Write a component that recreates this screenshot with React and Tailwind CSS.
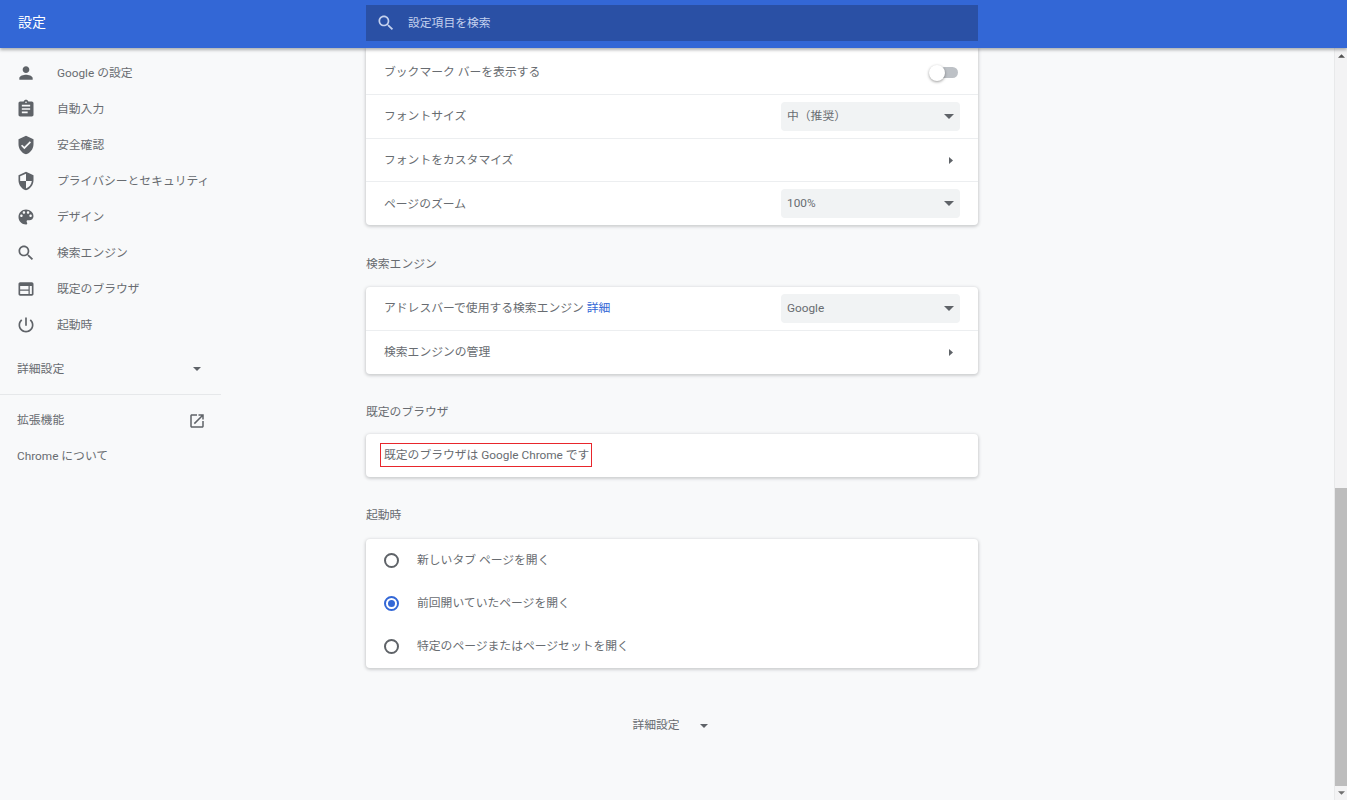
const P = {
  person: "M12 12c2.21 0 4-1.79 4-4s-1.79-4-4-4-4 1.79-4 4 1.79 4 4 4zm0 2c-2.67 0-8 1.34-8 4v2h16v-2c0-2.66-5.33-4-8-4z",
  assignment: "M19 3h-4.18C14.4 1.84 13.3 1 12 1c-1.3 0-2.4.84-2.82 2H5c-1.1 0-2 .9-2 2v14c0 1.1.9 2 2 2h14c1.1 0 2-.9 2-2V5c0-1.1-.9-2-2-2zm-7 0c.55 0 1 .45 1 1s-.45 1-1 1-1-.45-1-1 .45-1 1-1zm2 14H7v-2h7v2zm3-4H7v-2h10v2zm0-4H7V7h10v2z",
  verified: "M12 1L3 5v6c0 5.55 3.84 10.74 9 12 5.16-1.26 9-6.45 9-12V5l-9-4zm-2 16l-4-4 1.41-1.41L10 14.17l6.59-6.59L18 9l-8 8z",
  security: "M12 1L3 5v6c0 5.55 3.84 10.74 9 12 5.16-1.26 9-6.45 9-12V5l-9-4zm0 10.99h7c-.53 4.12-3.28 7.79-7 8.94V12H5V6.3l7-3.11v8.8z",
  palette: "M12 3c-4.97 0-9 4.03-9 9s4.03 9 9 9c.83 0 1.5-.67 1.5-1.5 0-.39-.15-.74-.39-1.01-.23-.26-.38-.61-.38-.99 0-.83.67-1.5 1.5-1.5H16c2.76 0 5-2.24 5-5 0-4.42-4.03-8-9-8zm-5.5 9c-.83 0-1.5-.67-1.5-1.5S5.67 9 6.5 9 8 9.67 8 10.5 7.33 12 6.5 12zm3-4C8.67 8 8 7.33 8 6.5S8.67 5 9.5 5s1.5.67 1.5 1.5S10.33 8 9.5 8zm5 0c-.83 0-1.5-.67-1.5-1.5S13.67 5 14.5 5s1.5.67 1.5 1.5S15.33 8 14.5 8zm3 4c-.83 0-1.5-.67-1.5-1.5S16.67 9 17.5 9s1.5.67 1.5 1.5-.67 1.5-1.5 1.5z",
  search: "M15.5 14h-.79l-.28-.27C15.41 12.59 16 11.11 16 9.5 16 5.91 13.09 3 9.5 3S3 5.91 3 9.5 5.91 16 9.5 16c1.61 0 3.09-.59 4.23-1.57l.27.28v.79l5 4.99L20.49 19l-4.99-5zm-6 0C7.01 14 5 11.99 5 9.5S7.01 5 9.5 5 14 7.01 14 9.5 11.99 14 9.5 14z",
  web: "M19 4H5c-1.11 0-2 .9-2 2v12c0 1.1.89 2 2 2h14c1.1 0 2-.9 2-2V6c0-1.1-.89-2-2-2zm-4 14H5v-4h10v4zm0-5.5H5V8.5h10v4zm4 5.5h-2.5V8.5H19V18z",
  power: "M13 3h-2v10h2V3zm4.83 2.17l-1.42 1.42C17.99 7.86 19 9.81 19 12c0 3.87-3.13 7-7 7s-7-3.13-7-7c0-2.19 1.01-4.14 2.58-5.42L6.17 5.17C4.23 6.82 3 9.26 3 12c0 4.97 4.03 9 9 9s9-4.03 9-9c0-2.74-1.23-5.18-3.17-6.83z",
  open: "M19 19H5V5h7V3H5c-1.11 0-2 .9-2 2v14c0 1.1.89 2 2 2h14c1.1 0 2-.9 2-2v-7h-2v7zM14 3v2h3.59l-9.83 9.83 1.41 1.41L19 6.41V10h2V3h-7z",
};

const txt = "text-[11.8px] text-[#686c71]";

function Icon({ d, className }) {
  return (
    <svg viewBox="0 0 24 24" fill="currentColor" className={className}>
      <path d={d} />
    </svg>
  );
}

function Caret({ className }) {
  return (
    <svg viewBox="0 0 10 5" fill="currentColor" className={className}>
      <path d="M0 0h10L5 5z" />
    </svg>
  );
}

function Arrow() {
  return (
    <svg viewBox="0 0 4 7" fill="currentColor" className="w-1 h-[7px] text-[#5f6368]">
      <path d="M0 0l4 3.5-4 3.5z" />
    </svg>
  );
}

function NavItem({ icon, children }) {
  return (
    <div className="h-9 flex items-center pl-4 text-[#5f6368]">
      <Icon d={P[icon]} className="w-5 h-5 shrink-0" />
      <span className={`ml-[21px] pt-[2px] ${txt}`}>{children}</span>
    </div>
  );
}

function Select({ children }) {
  return (
    <div className={`w-[179px] h-[29px] rounded bg-[#f1f3f4] flex items-center justify-between px-[6px] ${txt}`}>
      <span>{children}</span>
      <Caret className="w-2.5 h-[5px] text-[#5f6368]" />
    </div>
  );
}

function Row({ h = "h-11", last, arrow, first, children }) {
  return (
    <div className={`${h} flex items-center justify-between pl-[18px] ${arrow ? "pr-[25px]" : "pr-[18px]"} ${first ? "pt-[2px]" : ""} ${txt} ${last ? "" : "border-b border-[#eceef0]"}`}>
      {children}
    </div>
  );
}

function Radio({ checked, children }) {
  return (
    <div className={`h-[43px] flex items-center pl-[18px] ${txt}`}>
      <span className={`w-[15px] h-[15px] rounded-full border-2 flex items-center justify-center ${checked ? "border-[#3367d6]" : "border-[#5f6368]"}`}>
        {checked && <span className="w-[7px] h-[7px] rounded-full bg-[#3367d6]" />}
      </span>
      <span className="ml-[18px]">{children}</span>
    </div>
  );
}

const card = "bg-white rounded shadow-[0_1px_3px_1px_rgba(60,64,67,0.22)]";
const heading = `h-[17px] leading-[17px] font-normal ${txt}`;

export default function App() {
  return (
    <div
      className="h-[800px] w-full overflow-hidden flex flex-col bg-[#f8f9fa]"
      style={{ fontFamily: 'Roboto, "Noto Sans CJK JP", sans-serif' }}
    >
      <header className="relative z-10 h-12 shrink-0 bg-[#3367d6] flex items-center shadow-[0_2px_3px_rgba(60,64,67,0.4)]">
        <div className="w-[366px] shrink-0 pl-[18px] pb-[4px] text-white text-sm">設定</div>
        <div className="w-[612px] h-9 mb-[2px] bg-[#2a50a5] flex items-center pl-[10px] text-[#c4d1ee]">
          <Icon d={P.search} className="w-5 h-5 shrink-0" />
          <span className="ml-[12px] pt-[1px] text-[11.8px]">設定項目を検索</span>
        </div>
      </header>

      <div className="flex-1 flex min-h-0">
        <aside className="w-[221px] shrink-0 pt-[7px]">
          <NavItem icon="person">Google の設定</NavItem>
          <NavItem icon="assignment">自動入力</NavItem>
          <NavItem icon="verified">安全確認</NavItem>
          <NavItem icon="security">プライバシーとセキュリティ</NavItem>
          <NavItem icon="palette">デザイン</NavItem>
          <NavItem icon="search">検索エンジン</NavItem>
          <NavItem icon="web">既定のブラウザ</NavItem>
          <NavItem icon="power">起動時</NavItem>
          <div className={`h-[52px] flex items-center justify-between pl-[17px] pr-[20px] border-b border-[#e6e8ea] ${txt}`}>
            <span className="pt-[2px]">詳細設定</span>
            <Caret className="w-2 h-1 text-[#5f6368]" />
          </div>
          <div className={`h-[51px] flex items-center justify-between pl-[17px] pr-[15px] ${txt}`}>
            <span>拡張機能</span>
            <Icon d={P.open} className="w-[18px] h-[18px] text-[#5f6368]" />
          </div>
          <div className={`h-[21px] flex items-center pl-[17px] ${txt}`}>
            <span>Chrome について</span>
          </div>
        </aside>

        <main className="flex-1 min-w-0 pl-[145px]">
          <div className="w-[612px]">
            <section className={`${card} rounded-t-none`}>
              <Row h="h-[47px]" first>
                <span className="pt-[2px]">ブックマーク バーを表示する</span>
                <span className="relative w-[28px] h-[11px] rounded-full bg-[#bdc1c6] mr-[2px]">
                  <span className="absolute -left-[1px] -top-[2px] w-[16px] h-[16px] rounded-full bg-white shadow-[0_1px_3px_rgba(0,0,0,0.4)]" />
                </span>
              </Row>
              <Row>
                <span className="pt-[1px]">フォントサイズ</span>
                <Select>中（推奨）</Select>
              </Row>
              <Row h="h-[43px]" arrow>
                <span className="pt-[2px]">フォントをカスタマイズ</span>
                <Arrow />
              </Row>
              <Row h="h-[43px]" last>
                <span className="pt-[2px]">ページのズーム</span>
                <Select>100%</Select>
              </Row>
            </section>

            <h2 className={`mt-[31px] mb-[14px] ${heading}`}>検索エンジン</h2>
            <section className={card}>
              <Row>
                <span>アドレスバーで使用する検索エンジン <span className="text-[#3367d6]">詳細</span></span>
                <Select>Google</Select>
              </Row>
              <Row h="h-[43px]" last arrow>
                <span>検索エンジンの管理</span>
                <Arrow />
              </Row>
            </section>

            <h2 className={`mt-[30px] mb-[13px] ${heading}`}>既定のブラウザ</h2>
            <section className={card}>
              <div className={`h-[43px] flex items-center pl-[14px] pb-[1px] ${txt}`}>
                <span className="h-6 flex items-center pl-[3px] pr-[2px] pt-[2px] border border-[#e8262c]">既定のブラウザは Google Chrome です</span>
              </div>
            </section>

            <h2 className={`mt-[30px] mb-[15px] ${heading}`}>起動時</h2>
            <section className={card}>
              <Radio>新しいタブ ページを開く</Radio>
              <Radio checked>前回開いていたページを開く</Radio>
              <Radio>特定のページまたはページセットを開く</Radio>
            </section>

            <div className={`mt-[49px] pr-[4px] h-[18px] flex items-center justify-center ${txt}`}>
              <span>詳細設定</span>
              <Caret className="w-2 h-1 ml-[20px] text-[#5f6368]" />
            </div>
          </div>
        </main>

        <div className="w-[13px] shrink-0 flex flex-col bg-[#f3f3f4] border-l border-[#e8e9ea]">
          <div className="h-4 flex items-center justify-center">
            <Caret className="w-[7px] h-1 rotate-180 text-[#505050]" />
          </div>
          <div className="flex-1" />
          <div className="h-[298px] bg-[#bdbdbd]" />
          <div className="h-[14px] flex items-center justify-center">
            <Caret className="w-[7px] h-1 text-[#707070]" />
          </div>
        </div>
      </div>
    </div>
  );
}
